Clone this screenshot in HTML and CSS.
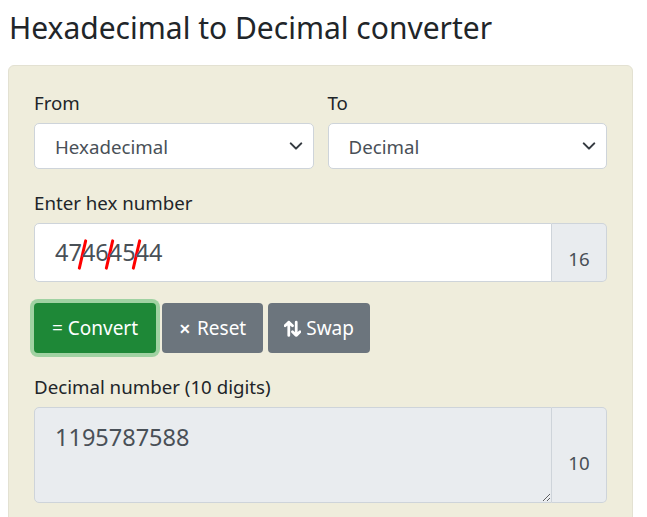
FILE: index.html
```html
<!DOCTYPE html>
<html lang="en">
<head>
<meta charset="utf-8">
<title>Hexadecimal to Decimal converter</title>
<link rel="stylesheet" href="styles.css">
</head>
<body>
<h1 class="title">Hexadecimal to Decimal converter</h1>
<div class="panel">
  <div class="row">
    <div class="col">
      <label class="lbl" for="from">From</label>
      <div class="select-wrap">
        <select id="from" class="select"><option>Hexadecimal</option></select>
        <svg class="chev" viewBox="0 0 16 16" width="14" height="14"><path fill="none" stroke="#343a40" stroke-linecap="round" stroke-linejoin="round" stroke-width="2.4" d="M2 5l6 6 6-6"/></svg>
      </div>
    </div>
    <div class="col">
      <label class="lbl" for="to">To</label>
      <div class="select-wrap">
        <select id="to" class="select"><option>Decimal</option></select>
        <svg class="chev" viewBox="0 0 16 16" width="14" height="14"><path fill="none" stroke="#343a40" stroke-linecap="round" stroke-linejoin="round" stroke-width="2.4" d="M2 5l6 6 6-6"/></svg>
      </div>
    </div>
  </div>

  <label class="lbl">Enter hex number</label>
  <div class="group">
    <div class="field hex"><span class="byte cut">47</span><span class="byte cut">46</span><span class="byte cut">45</span><span class="byte">44</span></div>
    <div class="addon">16</div>
  </div>

  <div class="buttons">
    <button class="btn btn-green">= Convert</button>
    <button class="btn btn-grey"><span class="x">&#x2715;</span> Reset</button>
    <button class="btn btn-grey btn-swap"><svg class="swap" viewBox="0 0 16 16" width="17" height="17"><path fill="none" stroke="#fff" stroke-width="2.6" stroke-linecap="round" stroke-linejoin="round" d="M4.5 14.5V2M1 5.5l3.5-3.5 3.5 3.5M11.5 2v12.5M8 11l3.5 3.5 3.5-3.5"/></svg> Swap</button>
  </div>

  <label class="lbl" for="out">Decimal number (10 digits)</label>
  <div class="group">
    <textarea id="out" class="field out" readonly>1195787588</textarea>
    <div class="addon addon-tall">10</div>
  </div>
</div>
</body>
</html>
```

FILE: styles.css
```css
* { box-sizing: border-box; }
body {
  margin: 0;
  padding: 0 14px 0 8px;
  font-family: "Noto Sans", "Open Sans", sans-serif;
  color: #212529;
  background: #fff;
}
.title {
  margin: 0;
  padding: 8px 0 0 1px;
  font-size: 30px;
  font-weight: 400;
  line-height: 40px;
  height: 65px;
}
.panel {
  background: #efeddc;
  border: 1px solid #e3e1d2;
  border-radius: 6px;
  padding: 22px 25px 20px 25px;
  width: 625px;
  height: 470px;
}
.row {
  display: flex;
  gap: 14px;
  margin-bottom: 19px;
}
.col { flex: 1; }
.lbl {
  display: block;
  font-size: 18.7px;
  line-height: 30px;
  margin-bottom: 5px;
}
.select-wrap { position: relative; }
.select {
  appearance: none;
  -webkit-appearance: none;
  width: 100%;
  height: 46px;
  border: 1px solid #ced4da;
  border-radius: 5px;
  background: #fff;
  color: #495057;
  font-family: inherit;
  font-size: 18.7px;
  padding: 0 40px 0 20px;
}
.chev {
  position: absolute;
  right: 11px;
  top: 16px;
}
.group {
  display: flex;
  margin-bottom: 21px;
}
.field {
  flex: 1;
  border: 1px solid #ced4da;
  border-radius: 5px 0 0 5px;
  color: #495057;
  font-family: inherit;
  font-size: 23.5px;
}
.hex {
  height: 59px;
  background: #fff;
  padding: 0 20px;
  line-height: 57px;
}
.byte {
  position: relative;
  display: inline-block;
  line-height: 57px;
}
.byte.cut::after {
  content: "";
  position: absolute;
  right: -2px;
  top: 15px;
  width: 3px;
  height: 31px;
  background: #f00;
  border-radius: 2px;
  transform: rotate(13deg);
}
.addon {
  width: 55px;
  border: 1px solid #ced4da;
  border-left: 0;
  border-radius: 0 5px 5px 0;
  background: #e9ecef;
  color: #495057;
  font-size: 18.7px;
  display: flex;
  align-items: center;
  justify-content: center;
  padding-top: 11px;
}
.buttons {
  display: flex;
  gap: 5px;
  margin-bottom: 19px;
}
.btn {
  height: 50px;
  border: 0;
  border-radius: 4px;
  color: #fff;
  font-family: inherit;
  font-size: 19px;
  padding: 0 17px;
  display: flex;
  align-items: center;
  gap: 6px;
}
.btn-green {
  background: #1e8837;
  box-shadow: 0 0 0 4px #a0d2a2;
  width: 122px;
  justify-content: center;
  margin-right: 1px;
}
.btn-grey { background: #6c757d; }
.btn-swap { padding: 0 16px; gap: 5px; }
.x { font-size: 14px; font-weight: 700; }
.swap { display: block; }
.out {
  height: 96px;
  background: #e9ecef;
  padding: 12px 20px;
  line-height: 34px;
  resize: vertical;
  display: block;
}
.addon-tall { padding-top: 14px; }
```
